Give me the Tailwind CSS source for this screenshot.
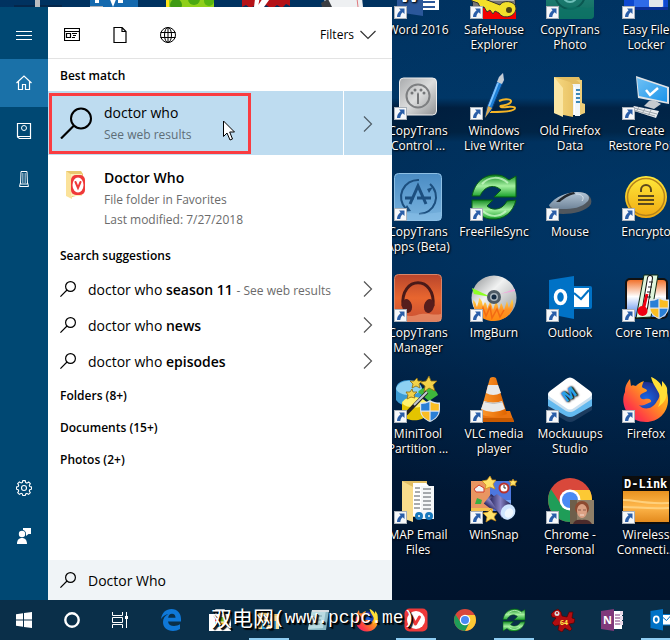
<!doctype html>
<html lang="en">
<head>
    <meta charset="UTF-8">
    <meta name="viewport" content="width=device-width, initial-scale=1.0">
    <script src="https://cdn.jsdelivr.net/npm/@tailwindcss/browser@4"></script>
    <title>Doctor Who - Search</title>
</head>
<body class="font-['Open_Sans','Noto_Sans',sans-serif]">

<!-- icon sprites -->
<svg class="absolute size-0" aria-hidden="true">
    <defs>
        <linearGradient id="g-teal" x2="0" y2="1"><stop stop-color="#2d8f8a"/><stop offset="1" stop-color="#0f6b5c"/></linearGradient>
        <linearGradient id="g-silver" x2="1" y2="1"><stop stop-color="#a9abad"/><stop offset=".5" stop-color="#dcdddd"/><stop offset="1" stop-color="#909294"/></linearGradient>
        <linearGradient id="g-sky" x2="0" y2="1"><stop stop-color="#4a8cc4"/><stop offset="1" stop-color="#79b3de"/></linearGradient>
        <linearGradient id="g-brick" x2="0" y2="1"><stop stop-color="#b8452c"/><stop offset=".5" stop-color="#e8662f"/><stop offset="1" stop-color="#c95034"/></linearGradient>
        <linearGradient id="g-green" x2="0" y2="1"><stop stop-color="#128a22"/><stop offset=".5" stop-color="#a5f0a0"/><stop offset="1" stop-color="#17a02a"/></linearGradient>
        <linearGradient id="g-folder" x2="1" y2="0"><stop stop-color="#f6d983"/><stop offset="1" stop-color="#e9c365"/></linearGradient>
        <linearGradient id="g-screen" x2="1" y2="1"><stop stop-color="#6fc1f5"/><stop offset="1" stop-color="#1b94ea"/></linearGradient>
        <linearGradient id="g-mouse" x2="0" y2="1"><stop stop-color="#b4c6d6"/><stop offset="1" stop-color="#6f8499"/></linearGradient>
        <linearGradient id="g-gold" x2="0" y2="1"><stop stop-color="#ffe93b"/><stop offset="1" stop-color="#f0a911"/></linearGradient>
        <linearGradient id="g-temp" x2="0" y2="1"><stop stop-color="#f06a20"/><stop offset=".45" stop-color="#fff"/><stop offset="1" stop-color="#3b77e8"/></linearGradient>
        <linearGradient id="g-cone" x2="1" y2="0"><stop stop-color="#ff9a2e"/><stop offset="1" stop-color="#e06400"/></linearGradient>
        <linearGradient id="g-flame" x2="0" y2="1"><stop stop-color="#ffe14d"/><stop offset=".5" stop-color="#ff9326"/><stop offset="1" stop-color="#ff8a10"/></linearGradient>
        <linearGradient id="g-fox" x1="1" x2="0" y2="1"><stop stop-color="#ffe226"/><stop offset=".4" stop-color="#ff9a1f"/><stop offset=".75" stop-color="#ff3b45"/><stop offset="1" stop-color="#e4178f"/></linearGradient>
        <radialGradient id="g-globe"><stop stop-color="#1668e8"/><stop offset="1" stop-color="#21308f"/></radialGradient>
        <linearGradient id="g-disc" x2="1" y2="1"><stop stop-color="#8b8e90"/><stop offset=".4" stop-color="#f1f2f2"/><stop offset="1" stop-color="#8d9092"/></linearGradient>
        <linearGradient id="g-torch" x2="1" y2="0"><stop stop-color="#2b2862"/><stop offset=".5" stop-color="#8783c4"/><stop offset="1" stop-color="#23204f"/></linearGradient>
        <linearGradient id="g-link" x2="0" y2="1"><stop stop-color="#e8921f"/><stop offset=".5" stop-color="#ffb84d"/><stop offset="1" stop-color="#e38a1d"/></linearGradient>
    </defs>

    <symbol id="i-shortcut" viewBox="0 0 13 13">
        <path d="M0 0h13v13H0z" fill="#a9b0b8"/><path d="M1 1h11v11H1z" fill="#f6f8fa"/>
        <path d="M5 2.500h5.500V8L8.700 6.200C7 7.500 6.500 9 6.300 11H3C3 8 4.200 6 6.600 4.200z" fill="#2a5ea8"/>
    </symbol>
    <symbol id="i-shield" viewBox="0 0 20 22">
        <path d="M10 0c3 2 6 2.500 10 2.500v7C20 16 15 20 10 22 5 20 0 16 0 9.500v-7C4 2.500 7 2 10 0z" fill="#dfe6ee"/>
        <path d="M9.400 2v8.500H1.200V4C4.500 4 7 3.300 9.400 2zM10.600 11.700h8C18 16 14.500 19 10.600 20.700z" fill="#2a7fd6"/>
        <path d="M10.600 2v8.500h8.200V4c-3.300 0-5.800-.7-8.200-2zM9.400 11.700h-8C2 16 5.500 19 9.400 20.700z" fill="#fbbd23"/>
    </symbol>
    <symbol id="i-search" viewBox="0 0 32 32">
        <circle cx="21" cy="11.500" r="10" fill="none" stroke="currentColor" stroke-width="2"/>
        <path d="M14 18.500 1 31.500" stroke="currentColor" stroke-width="2.200"/>
    </symbol>
    <symbol id="i-search-sm" viewBox="0 0 16 16">
        <circle cx="10.500" cy="5.500" r="4.900" fill="none" stroke="currentColor" stroke-width="1.200"/>
        <path d="M7 9 .4 15.600" stroke="currentColor" stroke-width="1.200"/>
    </symbol>
    <symbol id="i-next" viewBox="0 0 10 16"><path d="M1 .5 8.500 8 1 15.500" fill="none" stroke="currentColor" stroke-width="1.200"/></symbol>

    <!-- desktop -->
    <symbol id="i-bin" viewBox="0 0 48 48"><path d="M21 0h5v48h-5z" fill="#b9bcc0"/><path d="M0 34h48v14H0z" fill="#091a33" opacity=".5"/><path d="M21 28h5v8h-5z" fill="#b9bcc0"/></symbol>
    <symbol id="i-maxthon" viewBox="0 0 48 48"><path d="M0 0h48v48H0z" fill="#1469ae"/><path d="M5 10h4v22H5zM33 10v22h-5V10zM19 26h8l-4 10z" fill="#fff"/></symbol>
    <symbol id="i-puzzle" viewBox="0 0 48 48"><path d="M0 0h48v48H0z" fill="#8fd01a"/><path d="M0 20h3v16H0z" fill="#ffe21a"/><circle cx="10" cy="34" r="6" fill="#3f9b14"/><circle cx="28" cy="28" r="6" fill="#4aa80f"/><circle cx="43" cy="30" r="5" fill="#56b50f"/></symbol>
    <symbol id="i-burst" viewBox="0 0 48 48"><path d="m0 2 48 0v33l-4-2-4 4-5-3-5 4-6-4-5 4-5-4-6 3-4-3-4 2z" fill="#b51218"/><path d="M14 20h5l-3 16h-4zM27 18h8L22 36h-7z" fill="#fff"/></symbol>
    <symbol id="i-paper" viewBox="0 0 48 48"><path d="M8 8h34l3 28H6z" fill="#eef0f2"/><path d="m3 32 7-4 4 8H4z" fill="#3a3d42"/><path d="m37 10 3 26" stroke="#e0777c"/></symbol>
    <symbol id="i-word" viewBox="0 0 48 48">
        <path d="M24 6h21v33H24z" fill="#fff"/><path d="M28 14h13M28 20h13M28 26h13M28 31h13M28 36h13" stroke="#2b579a" stroke-width="2"/>
        <path d="m3 5 26-5v45L3 41z" fill="#2b579a"/><text x="5" y="31" font-size="21" font-weight="700" fill="#fff">W</text>
    </symbol>
    <symbol id="i-safehouse" viewBox="0 0 48 48">
        <path d="M3 5h42v30H3z" fill="#b6b6b6" stroke="#222"/><path d="M3 30h42v5H3z" fill="#777"/><path d="M2 37h44v11H2z" fill="#f50000"/>
        <path d="M1 27c0-3 3-4 6-2l23 9c2-5 15-5 16 3 0 9-13 12-17 5l-4-2-2 3-3-4-3 2-3-5-4 0-2-4-6-2z" fill="#f3e02a" stroke="#333"/><circle cx="39" cy="39" r="3" fill="#4a4318"/>
    </symbol>
    <symbol id="i-ctphoto" viewBox="0 0 48 48"><rect width="48" height="48" rx="4" fill="url(#g-teal)"/><circle cx="24" cy="23" r="15" fill="none" stroke="#0a5751" stroke-width="2"/><circle cx="24" cy="24" r="7" fill="none" stroke="#6fc0ba" stroke-width="2"/><path d="M0 38c9-3 13 3 22-1s15 2 26-1v8a4 4 0 0 1-4 4H4a4 4 0 0 1-4-4z" fill="#0d7466" opacity=".7"/></symbol>
    <symbol id="i-locker" viewBox="0 0 48 48"><path d="M2 0h44v39H5l-3-3z" fill="#0e48cf"/><path d="M5 36h41v3H5z" fill="#0a2f97"/><path d="M12 20h30v16H12z" fill="#2f6be8"/><rect x="27" y="18" width="14" height="18" rx="1" fill="#e4e6ea"/></symbol>
    <symbol id="i-ctcontrol" viewBox="0 0 48 48">
        <rect x="5.500" y="6" width="37" height="37" rx="4" fill="url(#g-silver)" stroke="#eee"/>
        <circle cx="24" cy="24" r="11.500" fill="none" stroke="#7d7f81" stroke-width="2"/>
        <path d="m23 22 1-2 1 2v10h-2z" fill="#747678"/><g fill="#747678"><circle cx="18" cy="21" r="1.500"/><circle cx="21" cy="18" r="1.500"/><circle cx="27" cy="18" r="1.500"/><circle cx="30" cy="21" r="1.500"/></g>
    </symbol>
    <symbol id="i-writer" viewBox="0 0 48 48">
        <path d="M29 29c6-3 15-2 11 2-3 3-12 2-9 4 4 1 13-2 14 1 0 4-18 4-27 4" fill="none" stroke="#f5b526" stroke-width="2"/>
        <path d="m29 5 4-4 1 7-13 31-6 6 2-10z" fill="#1d7fd6" stroke="#0c3c78"/><path d="m29 5 4-4 1 7-2 4-5-2z" fill="#c5cdd4"/><path d="m28 11-9 23" stroke="#7cc3ff" stroke-width="2"/><path d="m18 34 4 2-7 10z" fill="#dba950"/>
    </symbol>
    <symbol id="i-oldfolder" viewBox="0 0 48 48">
        <path d="M8 5h25l2 4v34H18z" fill="#e2bd62"/><path d="M25 12h10v31H25z" fill="#eff3f6"/><path d="M28 15h5v28h-5z" fill="#fff"/><path d="M29 19h4M29 23h4M29 27h4M29 31h4" stroke="#3c87b8" stroke-width="2"/>
        <path d="M30 8h6v23l3 1v9l-5 2V11z" fill="#edcd78"/><path d="M29 14h5v30h-5z" fill="#f2f6f8"/><path d="M30 18h4M30 22h4M30 26h4M30 30h4" stroke="#3c87b8" stroke-width="2"/><path d="m8 5 16 5 3 3v32L8 41z" fill="url(#g-folder)"/><path d="M8 5v36l9 4V16z" fill="#fae6a4"/>
    </symbol>
    <symbol id="i-restore" viewBox="0 0 48 48">
        <path d="m14 4 33 11v17L16 26z" fill="#e0e3e6"/><path d="m15 6 30 10v14L17 24z" fill="url(#g-screen)"/><path d="m24 18 4 5 8-7" fill="none" stroke="#fff" stroke-width="2.500"/>
        <path d="m27 29 5-1 7 4-7 5-10-3z" fill="#c6cbd0"/><path d="m12 34 25 5-3 7-25-8z" fill="#e9ecee"/><path d="m12 36 23 6M11 38l22 6M17 35l-3 5M23 36l-3 6M29 38l-3 6" stroke="#9ea6ad"/>
    </symbol>
    <symbol id="i-ctapps" viewBox="0 0 48 48">
        <rect x=".5" y=".5" width="47" height="47" rx="4" fill="url(#g-sky)" stroke="#8dbfe4"/>
        <path d="M12 36A17 17 0 0 1 25 7M36 11a17 17 0 0 1-11 30" fill="none" stroke="#1c4f7f" stroke-width="2"/><path d="m9 39 8-1-4-6zM33 16l6-2-4 6z" fill="#1c4f7f"/>
        <path d="m16 31 8-18 8 18M11 25h9M23 25h14" fill="none" stroke="#1c4f7f" stroke-width="3"/>
        <path d="M1 42c14-5 20 1 46-3v8H1z" fill="#8cc2ea" opacity=".5"/>
    </symbol>
    <symbol id="i-sync" viewBox="0 0 48 48">
        <g fill="url(#g-green)" stroke="#075f12"><path d="M2 23C5 9 14 1 27 2c6 0 9 3 12 5l7-4v21H24l7-7c-8-7-17-3-21 6z"/><path d="M46 27c-3 13-13 20-24 19-6 0-9-2-12-5l-8 5V27h21l-6 6c7 6 16 3 20-5z"/></g>
        <path d="M12 11c7-8 18-8 26-1M36 38c-7 7-17 6-23 0" fill="none" stroke="#d9ffd4" stroke-width="2" opacity=".7"/>
    </symbol>
    <symbol id="i-mouse" viewBox="0 0 48 48">
        <path d="M4 34c6-9 18-15 28-15 9 0 15 5 13 12-4 7-18 10-28 10-9 0-14-3-13-7z" fill="#50575e"/>
        <path d="M3 32c6-8 18-13 28-13 10 0 14 4 11 9-6 7-16 8-25 8-8 0-14-1-14-4z" fill="url(#g-mouse)"/>
        <path d="M10 29c5-5 11-9 18-10l1 2c-6 1-12 5-15 8z" fill="#23272c"/><path d="M30 21c6 0 9 3 6 7" fill="none" stroke="#d4e0ea"/>
    </symbol>
    <symbol id="i-encrypto" viewBox="0 0 48 48">
        <circle cx="24" cy="24" r="21" fill="url(#g-gold)"/><circle cx="24" cy="24" r="18.500" fill="none" stroke="#b4831b" stroke-width="1.500"/>
        <path d="M19 19v-2a5 5 0 0 1 10 0v2" fill="none" stroke="#5b491d" stroke-width="2"/><path d="M16 23h16M16 27h16M16 31h16" stroke="#5b491d" stroke-width="2"/>
    </symbol>
    <symbol id="i-ctmanager" viewBox="0 0 48 48">
        <rect x=".5" y=".5" width="47" height="47" rx="4" fill="url(#g-brick)" stroke="#d98467"/>
        <path d="M9 32C6 1 42 1 39 32" fill="none" stroke="#4a1a18" stroke-width="3"/>
        <ellipse cx="13" cy="32" rx="5" ry="7" transform="rotate(-15 13 32)" fill="#561d1c"/><ellipse cx="35" cy="32" rx="5" ry="7" transform="rotate(15 35 32)" fill="#561d1c"/>
        <path d="M1 41c9-2 12 3 22 0s16 1 24-1v7H1z" fill="#f0a27c" opacity=".6"/>
    </symbol>
    <symbol id="i-imgburn" viewBox="0 0 48 48">
        <circle cx="24" cy="24" r="22.500" fill="url(#g-disc)"/><path d="m2 14 19 9-17-3z" fill="#8dff26"/><path d="m30 20 15-5v2z" fill="#f2a5dc"/>
        <path d="M3 26c3 2 3 5 4 7 1-4 2-6 2-9 4 3 3 6 4 8l2-4c2 2 2 5 2 7l3-7c2 3 2 5 3 8l3-9c2 3 2 7 3 9l2-7c2 3 2 5 3 7l3-9c1 3 1 5 2 7l3-9c2 4 1 6 1 8C42 40 34 47 24 47 12 47 3 39 3 26z" fill="url(#g-flame)"/>
        <path d="m11 41 2-7 3 8 4-9 2 11 5-9 3 8 4-7" fill="none" stroke="#f36a13" stroke-width="1.500"/>
        <circle cx="24" cy="23" r="7" fill="#4e5b66"/><circle cx="24" cy="23" r="4" fill="#aab5bd"/><circle cx="24" cy="23" r="2.500" fill="#152c44"/>
    </symbol>
    <symbol id="i-outlook" viewBox="0 0 48 48">
        <path d="M26 12h18a2 2 0 0 1 2 2v19a2 2 0 0 1-2 2H26z" fill="#0072c6"/><path d="M28 14h15v19H28z" fill="#fff"/><path d="m28 19 7 6 8-9" fill="none" stroke="#0072c6" stroke-width="2"/>
        <path d="m3 6 25-4v43L3 40z" fill="#0072c6"/><ellipse cx="14.500" cy="23" rx="5" ry="6.500" fill="none" stroke="#fff" stroke-width="3.500"/>
    </symbol>
    <symbol id="i-coretemp" viewBox="0 0 48 48">
        <rect x="4" y="5" width="41" height="39" rx="4" fill="url(#g-temp)" stroke="#111" stroke-width="2"/>
        <path d="M22 1h14l-7 42-15 1z" fill="#dff5dc" stroke="#0e2b12"/><path d="m28 4-5 30" stroke="#111" stroke-width="6" stroke-linecap="round"/><path d="m28 4-5 30" stroke="#fff" stroke-width="4" stroke-linecap="round"/>
        <path d="m25 20-4 17" stroke="#f00010" stroke-width="3"/><circle cx="20.500" cy="37" r="5" fill="#f00010"/><path d="m27 8 4 0M26 13h4M25 18h4M25 23h4" stroke="#222"/>
        <use href="#i-shield" x="27" y="23" width="20" height="22"/>
    </symbol>
    <symbol id="i-minitool" viewBox="0 0 48 48">
        <path d="M2 14c0-12 25-12 26 0v11c-7 8-20 8-26 0z" fill="#3b9bd4"/><path d="M2 14c2-11 24-11 26 0-4 8-22 8-26 0z" fill="#8dd1f2"/>
        <path d="M8 28c5-7 20-7 25 0v12c-5 7-20 7-25 0z" fill="#e3c400"/><path d="M8 28c3-8 20-8 25 0-3 6-21 6-25 0z" fill="#fff26b"/><path d="M24 17c5-7 18-5 20 3l-9 6z" fill="#3fb83c"/>
        <g fill="#f3d24a" stroke="#8a6a10" stroke-width=".8"><path d="m35 1 2 5 6 0-4 4 2 6-6-3-5 4 1-6-5-4 6-1z"/><path d="m23 3 1 3 4 0-3 3 1 4-4-2-4 2 1-4-3-3 4 0z"/><path d="m18 14 1 3 4 0-3 3 1 3-4-1-4 2 1-4-2-3 4 0z"/></g>
        <path d="M12 39 33 17" stroke="#222" stroke-width="3.500"/><path d="m20 30 13-13" stroke="#c5cad0" stroke-width="2"/><use href="#i-shield" x="26" y="25" width="20" height="22"/>
    </symbol>
    <symbol id="i-vlc" viewBox="0 0 48 48">
        <path d="M7 36h33l4 11H3z" fill="#ea7310"/><path d="M4 43h39l1 4H3z" fill="#c95a00"/><path d="M20 3q3-2 6 0l11 36q-14 6-27 0z" fill="url(#g-cone)"/>
        <path d="m18 10 10 0 3 8q-8 4-15 0zM14 26q9 3 18 0l3 8q-12 6-24 0z" fill="#e9e9e9"/><path d="M15 27q9 3 17 0" fill="none" stroke="#bbb"/>
    </symbol>
    <symbol id="i-mockuuups" viewBox="0 0 48 48">
        <path d="M2 28v7l18 11q4 2 8 0l18-11v-7z" fill="#1c3b5e"/><path d="M2 21v10l18 10q4 2 8 0l18-10V21z" fill="#63b9ef"/>
        <path d="M2 19v5l18 12q4 2 8 0l18-12v-5z" fill="#c9dfef"/><path d="M4 16 20 4q4-3 8 0l16 12q4 3 0 6L28 33q-4 3-8 0L4 22q-4-3 0-6z" fill="#fff"/>
        <text x="16" y="24" font-size="15" font-weight="800" fill="#2ba0e8" transform="rotate(-35 24 19)">M</text>
    </symbol>
    <symbol id="i-firefox" viewBox="0 0 48 48">
        <circle cx="24" cy="24" r="17" fill="url(#g-globe)"/>
        <path d="M29 2c4 3 6 6 7 9 3 5 2 12-1 15-4 8-13 10-18 4 5 2 8-2 12-3 1-2-2-4-6-3-3 1-5-1-5-3 1-3 4-3 7-5 0-3-4-2-5-4 0-2 1-4 2-6-4 1-6 3-8 5-3-1-4-1-5 0L8 4C4 9 3 12 3 17 0 23 1 31 5 37c5 7 11 10 19 10 12 0 22-9 22-22 0-7-2-12-6-16 1 3 0 6 0 6-2-6-6-11-11-13z" fill="url(#g-fox)"/>
        <path d="M29 2c3 13 14 17 7 30 8-5 10-12 9-19-1-3-3-5-5-7v6c-2-5-6-8-11-10z" fill="#ffdf36"/>
    </symbol>
    <symbol id="i-mapmail" viewBox="0 0 48 48">
        <path d="M8 5h25v36H16z" fill="#e1bd63"/><path d="M19 7h13l5 5v31l-18-3z" fill="#fff"/><path d="M27 10h13v33H27z" fill="#f5f7f8"/>
        <path d="M21 12h5M21 16h5M20 20h6M20 24h6M20 28h6M20 32h6M29 13h8M29 17h8M29 21h8M29 25h8M29 29h8M29 33h8" stroke="#545b60"/>
        <circle cx="25" cy="40" r="2.500" fill="none" stroke="#1879bd" stroke-width="3"/><circle cx="35" cy="40" r="2.500" fill="none" stroke="#1879bd" stroke-width="3"/><path d="m8 5 11 6v35L8 42z" fill="#f8dc8c"/>
    </symbol>
    <symbol id="i-winsnap" viewBox="0 0 48 48">
        <path d="M1 5h22v30H1z" fill="#e99561"/><path d="M20 5h21v30H20z" fill="#4d77df"/><path d="M1 32h22v3H1z" fill="#f3c14e"/><path d="M30 24h11v11H30z" fill="#77a5f2"/>
        <path d="m4 13 5-4 5 3v4H6z" fill="#eef3f8" stroke="#d33c28"/><circle cx="34" cy="12" r="4.500" fill="#fff" stroke="#b8322c" stroke-width="2"/><path d="M34 9v3h2" fill="none" stroke="#333"/>
        <path d="m7 22 5 2-1 4H5z" fill="#39ae42"/>
        <path d="M18 19h12v7l-2 5v11H20V31l-2-5z" fill="url(#g-torch)" transform="rotate(-52 24 24) translate(-3 -1)"/>
        <path d="m20 23 7-5 14 10-9 14z" fill="url(#g-torch)"/><ellipse cx="38" cy="36" rx="7" ry="8" transform="rotate(35 38 36)" fill="#cfe6ff"/><ellipse cx="39" cy="37" rx="4" ry="5" transform="rotate(35 39 37)" fill="#f0f8ff"/>
        <g fill="#ffe36a" stroke="#cf8b13" stroke-width=".7"><path d="m20 0 2 4 4 0-3 4 2 5-5-2-5 2 1-4-4-4 5-1zM43 3l1 2 3 0-2 3 1 2-3-1-3 1 1-3-2-2 3 0zM21 33l2 4 4 0-3 4 2 4-5-2-5 3 1-5-4-4 5-1z"/></g>
    </symbol>
    <symbol id="i-chrome" viewBox="0 0 48 48">
        <circle cx="24" cy="24" r="22" fill="#d9483b"/><path d="M24 14h19.600A22 22 0 0 1 24 46l8.700-17z" fill="#fcc934"/><path d="M15.300 29 5 13.200A22 22 0 0 0 24 46l8.700-17z" fill="#1f9d58"/>
        <circle cx="24" cy="24" r="10.500" fill="#fff"/><circle cx="24" cy="24" r="8" fill="#4a8af4"/>
    </symbol>
    <symbol id="i-chromeuser" viewBox="0 0 48 48">
        <use href="#i-chrome" width="48" height="48"/><path d="M24 24h24v24H24z" fill="#8f7f68"/><path d="M24 24h7v24h-7z" fill="#6d5f4b"/>
        <ellipse cx="36" cy="32" rx="7" ry="7" fill="#8d4a30"/><ellipse cx="36" cy="35" rx="5" ry="7" fill="#dba184"/><path d="M32 34h3M37 34h3" stroke="#8d5a48"/><path d="M34 39h4" stroke="#f3dcd0"/><path d="M27 48c1-4 5-5 9-4 4-1 8 0 10 4z" fill="#4c2b2b"/>
    </symbol>
    <symbol id="i-dlink" viewBox="0 0 48 48">
        <path d="M0 0h48v48H0z" fill="#0d0d0d"/><text x="2" y="12" font-size="12" font-weight="800" font-family="DejaVu Sans Mono" fill="#fff">D-Link</text>
        <path d="M1 15h46v31H1z" fill="url(#g-link)"/><path d="M1 24c15 0 15 4 46 3M1 31c16 0 20 2 46 1" fill="none" stroke="#ffd07c" stroke-width="2"/>
    </symbol>

    <!-- taskbar -->
    <symbol id="i-start" viewBox="0 0 24 24"><path d="m4 6.200 7-1V11.500H4zM12 5l8-1v7.500h-8zM4 12.500h7v6.300l-7-1zM12 12.500h8V20l-8-1z" fill="#fff"/></symbol>
    <symbol id="i-cortana" viewBox="0 0 24 24"><circle cx="12" cy="12" r="6.700" fill="none" stroke="#fff" stroke-width="2.400"/></symbol>
    <symbol id="i-taskview" viewBox="0 0 24 24"><path d="M4.500 4v3.500h10V4M4.500 20v-3.500h10V20M4.500 9.500h10v5h-10zM18.500 4v16" fill="none" stroke="#fff"/><path d="M17 8h3v3h-3z" fill="#fff"/></symbol>
    <symbol id="i-edge" viewBox="0 0 24 24"><path d="M2 11C3 4.500 7 1 12.500 1 18.500 1 22 5.500 22 11v2.500H9c.3 3 2.700 4.500 6 4.500 2.200 0 4.300-.6 6-1.700v4.800C19 22.400 16.600 23 14 23c-6 0-10-3.600-10-9 0-3.500 2-6.500 5.300-8C7 6.500 4 8 2 11zM9.200 9.800h7.300c0-2.600-1.300-4-3.500-4-2.100 0-3.500 1.500-3.800 4z" fill="#0f78d8"/></symbol>
    <symbol id="i-store" viewBox="0 0 24 24"><path d="M1 6h22v17H1z" fill="#fff"/><path d="M8 6V2h8v4" fill="none" stroke="#fff" stroke-width="1.500"/><path d="M7 9h4.500v4.500H7z" fill="#f25022"/><path d="M12.500 9H17v4.500h-4.500z" fill="#7fba00"/><path d="M7 14.500h4.500V19H7z" fill="#00a4ef"/><path d="M12.500 14.500H17V19h-4.500z" fill="#ffb900"/></symbol>
    <symbol id="i-explorer" viewBox="0 0 24 24"><path d="M1 4h8l2 2h11v15H1z" fill="#f3cf72"/><path d="M1 8h21v13H1z" fill="#fbe29a"/><path d="M5 13h14v8h-4v-4H9v4H5z" fill="#3ea4df"/></symbol>
    <symbol id="i-notepad" viewBox="0 0 24 24"><path d="M6 2h17l-3 20H2z" fill="#8bb9c4"/><path d="M6 2h14l-3 18-15 1z" fill="#b9dce2"/><path d="M6 2h17v2H6z" fill="#d8dfe2"/><path d="M7 8h9M6 12h9M5 16h9" stroke="#78a2ac"/></symbol>
    <symbol id="i-vivaldi" viewBox="0 0 24 24"><rect x=".5" y=".5" width="23" height="23" rx="5" fill="#ef3939"/><circle cx="12" cy="12" r="9" fill="#fff"/><path d="m7.500 8.500 4 7.500 4-7" fill="none" stroke="#ef3939" stroke-width="3" stroke-linecap="round" stroke-linejoin="round"/></symbol>
    <symbol id="i-irfan" viewBox="0 0 24 24"><path d="M3 3 7 1l3 3 1 4 5 1 2-5 4 0-1 6 3 1-1 4-5 1 3 5-2 2-5-3-3 4-4-2 1-5-4 1-3-3 4-5-4-1-1-3z" fill="#b30d10" stroke="#4a0505" stroke-width=".7"/><circle cx="6" cy="5.500" r="2.500" fill="#ddd"/><circle cx="6" cy="5" r="1" fill="#b30d10"/><text x="9" y="17" font-size="7" font-weight="700" fill="#ffe84a">64</text></symbol>
    <symbol id="i-onenote" viewBox="0 0 24 24"><path d="M13 3h9v18h-9z" fill="#fff"/><path d="M15 7h5M15 10h5M15 13h5M15 16h5" stroke="#80397b"/><path d="M20 3h3v4h-3zM20 8h3v4h-3zM20 13h3v4h-3z" fill="#e9d9e8"/><path d="m1 3 13-2v22L1 21z" fill="#80397b"/><text x="3" y="16" font-size="11" font-weight="700" fill="#fff">N</text></symbol>
</svg>

<div class="flex h-screen flex-col overflow-hidden">

    <main class="relative min-h-0 flex-1 overflow-hidden bg-[radial-gradient(ellipse_at_100%_40%,#00417899,transparent_55%),linear-gradient(180deg,#003260_0px,#003462_98px,#00152f_108px,#00172f_132px,#002a52_142px,#002850_270px,#001c3c_380px,#00132c_600px)]">

        <!-- desktop icons, one flex column per column of icons -->
        <div id="desktop" class="-mt-[29px] flex"></div>

        <!-- search panel -->
        <section aria-label="Search" class="absolute top-[7px] bottom-0 left-0 flex w-[392px] bg-white text-black">
            <nav class="flex w-12 flex-col bg-[#004873] pt-1 pb-10 text-white">
                <button type="button" aria-label="Menu" class="flex h-12 items-center justify-center">
                    <svg class="size-4" viewBox="0 0 16 16"><path d="M0 4.500h16M0 8.500h16M0 12.500h16" stroke="currentColor"/></svg>
                </button>
                <button type="button" aria-label="Home" class="flex h-12 items-center justify-center bg-[#1a71a8]">
                    <svg class="size-4" viewBox="0 0 16 16" fill="none" stroke="currentColor" stroke-width="1.200"><path d="M.5 8 8 1l7.500 7M2.500 6.500v8h4v-5h3v5h4v-8"/></svg>
                </button>
                <button type="button" aria-label="Notebook" class="flex h-12 items-center justify-center">
                    <svg class="size-4" viewBox="0 0 16 16" fill="none" stroke="currentColor"><path d="M1.500.5h13v15h-11l-2-1.500zM1.500 13.500h13" stroke-width="1.200"/><circle cx="8" cy="5" r="2.500"/></svg>
                </button>
                <button type="button" aria-label="Devices" class="flex h-12 items-center justify-center">
                    <svg class="size-4" viewBox="0 0 16 16" fill="none" stroke="currentColor"><path d="M5 .5h6l.5 12.500h-7zM4.500 11.500l-1 4h9l-1-4"/><path d="M6 3h4M6 5h4M6 7h4M6 9h4M6 11h4" stroke-dasharray="1 .5"/></svg>
                </button>
                <button type="button" aria-label="Settings" class="mt-auto flex h-12 items-center justify-center">
                    <svg class="size-4" viewBox="0 0 16 16" fill="none" stroke="currentColor" stroke-width="1.100"><path d="M6.800.6h2.400l.5 2 1.200.5 1.800-1.100 1.600 1.700-1 1.700.5 1.200 1.700.4v2.200l-1.800.6-.4 1.200 1 1.700-1.700 1.700-1.700-1-1.200.5-.5 1.600H6.800l-.5-1.700-1.200-.5-1.700 1.100-1.700-1.700 1-1.700-.5-1.200L.5 9.200V7l1.700-.5.5-1.200-1-1.700 1.700-1.700 1.700 1.100 1.200-.5z"/><circle cx="8" cy="8" r="2.500"/></svg>
                </button>
                <button type="button" aria-label="Feedback" class="flex h-12 items-center justify-center">
                    <svg class="size-4" viewBox="0 0 16 16" fill="currentColor"><circle cx="6" cy="6" r="3.200"/><path d="M1 16c0-4 2-6 5-6s5 2 5 6zM7 0h8v6h-2.500L10 8V6c0-2-1-3.500-3-4z"/></svg>
                </button>
            </nav>

            <div class="flex min-w-0 flex-1 flex-col">
                <header class="flex h-[52px] items-center border-b border-[#e3e3e3] pt-1">
                    <button type="button" aria-label="Apps" class="flex w-12 justify-center">
                        <svg class="size-4" viewBox="0 0 16 16" fill="none" stroke="currentColor"><path d="M.5 1.500h15v12H.5zM.5 4.500h15M2.500 6.500h4v4h-4zM8 6.500h5M9 8.500h3M8 10.500h3" stroke-width="1.200"/></svg>
                    </button>
                    <button type="button" aria-label="Documents" class="flex w-12 justify-center">
                        <svg class="size-4" viewBox="0 0 16 16" fill="none" stroke="currentColor"><path d="M2 .5h8l4 4v11H2zM10 .5v4h4" stroke-width="1.200"/></svg>
                    </button>
                    <button type="button" aria-label="Web" class="flex w-12 justify-center">
                        <svg class="size-4" viewBox="0 0 16 16" fill="none" stroke="currentColor"><circle cx="8" cy="8" r="7.500"/><ellipse cx="8" cy="8" rx="3.500" ry="7.500"/><path d="M8 .5v15M.5 5.500h15M.5 10.500h15"/></svg>
                    </button>
                    <button type="button" class="mr-4 ml-auto flex items-center gap-1.5 text-[12px]">
                        Filters
                        <svg class="h-4 w-4" viewBox="0 0 16 16"><path d="m.5 4 7.500 7.500L15.500 4" fill="none" stroke="#333" stroke-width="1.200"/></svg>
                    </button>
                </header>

                <h2 class="flex h-8 items-center px-3 pt-0.5 text-[12px] font-semibold">Best match</h2>
                <div class="relative flex h-16 bg-[#bedcf0]">
                    <button type="button" class="flex flex-1 items-center gap-3 px-3 text-left">
                        <svg class="size-8"><use href="#i-search"/></svg>
                        <span class="pt-0.5">
                            <span class="block text-[14px] leading-[22px]">doctor who</span>
                            <span class="block text-[12px] leading-[22px] text-[#5d6d77]">See web results</span>
                        </span>
                    </button>
                    <button type="button" aria-label="More" class="flex w-[49px] items-center justify-center border-l border-white pt-0.5 text-[#4f5d66]">
                        <svg class="h-4 w-[10px]"><use href="#i-next"/></svg>
                    </button>
                    <div class="pointer-events-none absolute top-0.5 left-px h-[61px] w-[202px] border-3 border-[#fa3c41]"></div>
                    <svg class="pointer-events-none absolute top-[29px] left-[175px] h-[21px] w-3" viewBox="0 0 12 21"><path d="M.5 1v15.500L4 13l3 7 2.500-1L6.700 12h4.800z" fill="#fff" stroke="#000"/></svg>
                </div>

                <button type="button" class="flex h-[84px] items-start gap-4 px-4 pt-[11px] text-left">
                    <svg class="mt-1 h-8 w-6" viewBox="0 0 24 32">
                        <path d="M2 1h15l2 3v20l-11 3z" fill="#e9c76e"/><path d="m2 1 6 4v24l-6-3z" fill="#fbe29a"/><path d="M7 4h11v22H7z" fill="#fdeeb9"/>
                        <rect x="7" y="5" width="14" height="20" rx="5" fill="#ef3939"/><ellipse cx="14" cy="15" rx="5.500" ry="7.500" fill="#fff"/><path d="m11.500 12 2.500 6 2.500-6" fill="none" stroke="#ef3939" stroke-width="2" stroke-linecap="round"/>
                    </svg>
                    <span>
                        <span class="block text-[14px] leading-6 font-semibold">Doctor Who</span>
                        <span class="block text-[12px] leading-5 text-[#6b6b6b]">File folder in Favorites</span>
                        <span class="block text-[12px] leading-5 text-[#6b6b6b]">Last modified: 7/27/2018</span>
                    </span>
                </button>

                <h2 class="flex h-8 items-center px-3 pt-0.5 text-[12px] font-semibold">Search suggestions</h2>
                <button type="button" class="flex h-9 items-center gap-3 pr-[19px] pl-3 text-[14px]">
                    <svg class="size-4"><use href="#i-search-sm"/></svg>
                    <span>doctor who <b class="font-semibold">season 11</b> <span class="text-[12px] text-[#6b6b6b]">- See web results</span></span>
                    <svg class="ml-auto h-4 w-[10px] text-[#555]"><use href="#i-next"/></svg>
                </button>
                <button type="button" class="flex h-9 items-center gap-3 pr-[19px] pl-3 text-[14px]">
                    <svg class="size-4"><use href="#i-search-sm"/></svg>
                    <span>doctor who <b class="font-semibold">news</b></span>
                    <svg class="ml-auto h-4 w-[10px] text-[#555]"><use href="#i-next"/></svg>
                </button>
                <button type="button" class="flex h-9 items-center gap-3 pr-[19px] pl-3 text-[14px]">
                    <svg class="size-4"><use href="#i-search-sm"/></svg>
                    <span>doctor who <b class="font-semibold">episodes</b></span>
                    <svg class="ml-auto h-4 w-[10px] text-[#555]"><use href="#i-next"/></svg>
                </button>
                <button type="button" class="flex h-8 items-center px-3 pt-0.5 text-[12px] font-semibold">Folders (8+)</button>
                <button type="button" class="flex h-8 items-center px-3 pt-0.5 text-[12px] font-semibold">Documents (15+)</button>
                <button type="button" class="flex h-8 items-center px-3 pt-0.5 text-[12px] font-semibold">Photos (2+)</button>

                <label class="mt-auto flex h-10 items-center gap-3 bg-[#f0f4f7] px-3">
                    <svg class="size-4" role="img" aria-label="Search"><use href="#i-search-sm"/></svg>
                    <input type="text" value="Doctor Who" class="min-w-0 flex-1 bg-transparent text-[14px] outline-none">
                </label>
            </div>
        </section>
    </main>

    <footer class="relative h-10 shrink-0 bg-[#0a2f49]">
        <div class="flex h-full gap-0.5">
            <div id="system" class="flex"></div>
            <div id="pinned" class="flex"></div>
        </div>
        <p class="pointer-events-none absolute top-0.5 left-[211px] flex items-center font-['Noto_Sans_CJK_SC',sans-serif] text-[21px] leading-7 whitespace-nowrap text-white [text-shadow:2px_2px_1px_#000,1px_1px_0_#000]">双电网<span class="pt-0.5 font-['Liberation_Mono',monospace] text-[18px]">(www.pcpc.me)</span></p>
    </footer>
</div>

<script>
    // [icon, label, has shortcut arrow]
    const columns = [
        [["bin", "", false]],
        [["maxthon", "", true]],
        [["puzzle", "", false]],
        [["burst", "", false]],
        [["paper", "", false]],
        [
            ["word", "Word 2016", true],
            ["ctcontrol", "CopyTrans<br>Control ...", true],
            ["ctapps", "CopyTrans<br>Apps (Beta)", true],
            ["ctmanager", "CopyTrans<br>Manager", true],
            ["minitool", "MiniTool<br>Partition ...", true],
            ["mapmail", "MAP Email<br>Files", true],
        ],
        [
            ["safehouse", "SafeHouse<br>Explorer", true],
            ["writer", "Windows<br>Live Writer", true],
            ["sync", "FreeFileSync", true],
            ["imgburn", "ImgBurn", true],
            ["vlc", "VLC media<br>player", true],
            ["winsnap", "WinSnap", true],
        ],
        [
            ["ctphoto", "CopyTrans<br>Photo", true],
            ["oldfolder", "Old Firefox<br>Data", false],
            ["mouse", "Mouse", true],
            ["outlook", "Outlook", true],
            ["mockuuups", "Mockuuups<br>Studio", true],
            ["chromeuser", "Chrome -<br>Personal", true],
        ],
        [
            ["locker", "Easy File<br>Locker", true],
            ["restore", "Create<br>Restore Point", true],
            ["encrypto", "Encrypto", true],
            ["coretemp", "Core Temp", true],
            ["firefox", "Firefox", true],
            ["dlink", "Wireless<br>Connecti...", true],
        ],
    ];

    document.querySelector("#desktop").innerHTML = columns.map((column) => `
        <div class="w-[76px] shrink-0">
            ${column.map(([icon, label, shortcut]) => `
            <a href="#" class="flex h-[101px] flex-col items-center gap-[3px] text-center text-[12px] leading-[15px] whitespace-nowrap text-white [text-shadow:1px_1px_2px_#000,0_0_2px_#000]">
                <svg class="size-12 shrink-0" viewBox="0 0 48 48">
                    <use href="#i-${icon}" width="48" height="48"/>
                    ${shortcut ? '<use href="#i-shortcut" y="35" width="13" height="13"/>' : ""}
                </svg>
                <span>${label}</span>
            </a>`).join("")}
        </div>`).join("");

    // [icon, title, is running]
    const pinned = [
        ["edge", "Edge", false],
        ["store", "Store", false],
        ["explorer", "File Explorer", true],
        ["notepad", "Notepad", false],
        ["firefox", "Firefox", false],
        ["vivaldi", "Vivaldi", true],
        ["chrome", "Chrome", false],
        ["sync", "FreeFileSync", true],
        ["irfan", "IrfanView", false],
        ["onenote", "OneNote", false],
        ["outlook", "Outlook", true],
    ];
    const system = [["start", "Start"], ["cortana", "Cortana"], ["taskview", "Task View"]];

    document.querySelector("#system").innerHTML = system.map(([icon, title]) => `
        <button type="button" aria-label="${title}" class="flex w-12 shrink-0 items-center justify-center">
            <svg class="size-6"><use href="#i-${icon}"/></svg>
        </button>`).join("");

    document.querySelector("#pinned").innerHTML = pinned.map(([icon, title, running]) => `
        <button type="button" aria-label="${title}" class="flex w-[49px] shrink-0 flex-col items-center justify-between pt-2">
            <svg class="size-6"><use href="#i-${icon}"/></svg>
            ${running ? '<span class="h-0.5 w-10 bg-[#8fcdf2]"></span>' : ""}
        </button>`).join("");
</script>
</body>
</html>
